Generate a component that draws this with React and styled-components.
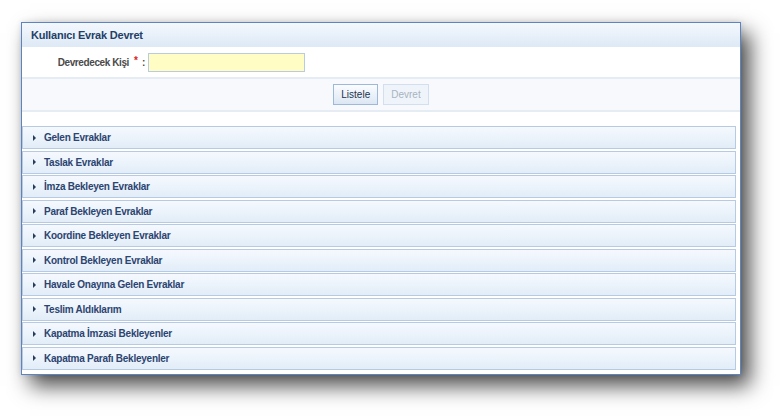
import React from "react";
import styled, { createGlobalStyle } from "styled-components";

const GlobalStyle = createGlobalStyle`
  body {
    margin: 0;
    background: #ffffff;
    font-family: "Liberation Sans", Arial, sans-serif;
  }
`;

const Page = styled.div`
  padding: 22px 0 44px 21px;
`;

const Window = styled.div`
  width: 718px;
  border: 1px solid #5b84c4;
  background: #ffffff;
  box-shadow: 9px 11px 20px rgba(0, 0, 0, 0.7), 0 0 6px rgba(0, 0, 0, 0.12);
`;

const Header = styled.div`
  height: 24px;
  display: flex;
  align-items: center;
  padding-left: 9px;
  background: linear-gradient(#f4f8fd, #dde9f6);
  color: #243f66;
  font-size: 11px;
  font-weight: bold;
  letter-spacing: -0.2px;
`;

const FormRow = styled.div`
  height: 30px;
  display: flex;
  align-items: center;
  border-bottom: 2px solid #e6ecf3;
`;

const Label = styled.label`
  width: 107px;
  text-align: right;
  color: #4a4a4a;
  font-size: 10px;
  font-weight: bold;
  letter-spacing: -0.4px;
`;

const Required = styled.span`
  color: #e02020;
  font-size: 10px;
  font-weight: bold;
  margin: 8px 4px 0 5px;
  align-self: flex-start;
`;

const Colon = styled.span`
  color: #4a4a4a;
  font-size: 10px;
  font-weight: bold;
  margin-right: 3px;
`;

const Input = styled.input`
  width: 155px;
  height: 17px;
  padding: 0;
  border: 1px solid #b8cbe2;
  background: #fffdc3;
  outline: none;
`;

const ButtonBar = styled.div`
  height: 31px;
  display: flex;
  justify-content: center;
  align-items: center;
  gap: 5px;
  background: #f7f9fc;
  border-bottom: 2px solid #e6ecf3;
`;

const Button = styled.button`
  height: 21px;
  padding: 0 7px;
  font-family: "Liberation Sans", Arial, sans-serif;
  font-size: 10px;
  border: 1px solid ${({ disabled }) => (disabled ? "#d3dfee" : "#9eb8da")};
  background: ${({ disabled }) =>
    disabled ? "#eff4fa" : "linear-gradient(#fbfcfe, #dce7f4)"};
  color: ${({ disabled }) => (disabled ? "#a8b3c1" : "#23324a")};
`;

const Panels = styled.div`
  display: flex;
  flex-direction: column;
  gap: 1.5px;
  padding: 14px 4px 4px 0;
`;

const Panel = styled.div`
  height: 21px;
  display: flex;
  align-items: center;
  padding-left: 10px;
  border: 1px solid #b7cae4;
  background: linear-gradient(#f5f9fe, #e2edf8);
  color: #2c4470;
  font-size: 10px;
  font-weight: bold;
  letter-spacing: -0.25px;
`;

const Arrow = styled.span`
  width: 0;
  height: 0;
  border-top: 3px solid transparent;
  border-bottom: 3px solid transparent;
  border-left: 3px solid #2a3c5c;
  margin-right: 8px;
`;

const panels = [
  "Gelen Evraklar",
  "Taslak Evraklar",
  "İmza Bekleyen Evraklar",
  "Paraf Bekleyen Evraklar",
  "Koordine Bekleyen Evraklar",
  "Kontrol Bekleyen Evraklar",
  "Havale Onayına Gelen Evraklar",
  "Teslim Aldıklarım",
  "Kapatma İmzasi Bekleyenler",
  "Kapatma Parafı Bekleyenler",
];

export default function App() {
  return (
    <Page>
      <GlobalStyle />
      <Window>
        <Header>Kullanıcı Evrak Devret</Header>
        <FormRow>
          <Label>Devredecek Kişi</Label>
          <Required>*</Required>
          <Colon>:</Colon>
          <Input />
        </FormRow>
        <ButtonBar>
          <Button>Listele</Button>
          <Button disabled>Devret</Button>
        </ButtonBar>
        <Panels>
          {panels.map((title) => (
            <Panel key={title}>
              <Arrow />
              {title}
            </Panel>
          ))}
        </Panels>
      </Window>
    </Page>
  );
}
